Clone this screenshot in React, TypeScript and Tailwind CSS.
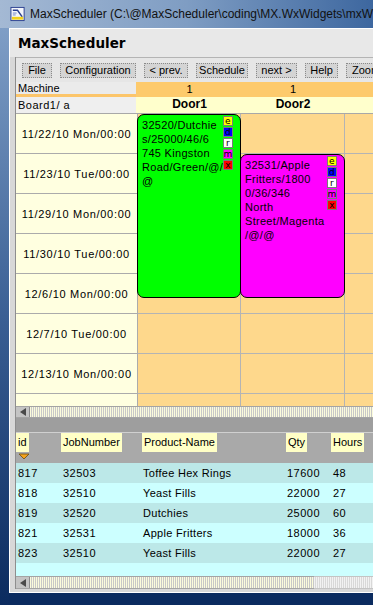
import React from "react";

const dates = [
  "11/22/10 Mon/00:00",
  "11/23/10 Tue/00:00",
  "11/29/10 Mon/00:00",
  "11/30/10 Tue/00:00",
  "12/6/10 Mon/00:00",
  "12/7/10 Tue/00:00",
  "12/13/10 Mon/00:00",
  "",
];

const jobs = [
  { id: "817", job: "32503", name: "Toffee Hex Rings", qty: "17600", hours: "48" },
  { id: "818", job: "32510", name: "Yeast Fills", qty: "22000", hours: "27" },
  { id: "819", job: "32520", name: "Dutchies", qty: "25000", hours: "60" },
  { id: "821", job: "32531", name: "Apple Fritters", qty: "18000", hours: "36" },
  { id: "823", job: "32510", name: "Yeast Fills", qty: "22000", hours: "27" },
];

const flags = [
  { letter: "e", bg: "bg-[#ffff00]" },
  { letter: "d", bg: "bg-[#0000ff]" },
  { letter: "r", bg: "bg-white" },
  { letter: "m", bg: "bg-[#ff00ff]" },
  { letter: "x", bg: "bg-[#ff0000]" },
];

const buttons = [
  { label: "File", w: "w-[30px]" },
  { label: "Configuration", w: "w-[76px]" },
  { label: "< prev.", w: "w-[44px]" },
  { label: "Schedule", w: "w-[52px]" },
  { label: "next >", w: "w-[41px]" },
  { label: "Help", w: "w-[33px]" },
  { label: "Zoom", w: "w-[40px]" },
];

const AppIcon = () => (
  <svg width="16" height="16" viewBox="0 0 16 16">
    <rect x="1" y="1" width="14" height="14" fill="#f4f6fb" stroke="#2a3f8f" />
    <path d="M3 4 L8 4 L13 11" stroke="#2a3f8f" strokeWidth="1.5" fill="none" />
    <path d="M3 7 H7 M3 9 H6" stroke="#6b7fc0" strokeWidth="1" />
    <rect x="2" y="11" width="12" height="3" fill="#f2d21c" />
  </svg>
);

const Flags = () => (
  <div className="absolute right-[7px] top-[1px] flex flex-col gap-[1px]">
    {flags.map((f) => (
      <div
        key={f.letter}
        className={`flex h-[10px] w-[10px] items-center justify-center border border-[#7a7a7a] ${f.bg} font-['DejaVu_Sans',sans-serif] text-[9px] leading-[8px] text-black`}
      >
        {f.letter}
      </div>
    ))}
  </div>
);

const Scrollbar = ({ className }: { className: string }) => (
  <div className={`flex shrink-0 border-y border-[#a4a4a4] ${className}`}>
    <div className="flex w-[14px] shrink-0 items-center justify-center border-r border-[#8c8c8c] bg-[#c4c4c4]">
      <div className="h-0 w-0 border-y-[4px] border-r-[6px] border-y-transparent border-r-[#4a4a4a]" />
    </div>
    <div className="flex-1 bg-[repeating-linear-gradient(90deg,#fbfbdc_0px,#fbfbdc_1px,#c8c8c8_1px,#c8c8c8_2px)]" />
  </div>
);

const App = () => {
  return (
    <div className="relative flex h-[605px] w-[373px] flex-col overflow-hidden bg-[#0b2b5f] font-['Liberation_Sans',Arial,sans-serif] text-black">
      {/* window title bar */}
      <div className="flex h-[28px] shrink-0 items-center gap-[5px] overflow-hidden bg-gradient-to-r from-[#a4b9d4] via-[#7f9dc3] to-[#3d679f] pl-[10px]">
        <AppIcon />
        <span className="whitespace-nowrap text-[12px] text-[#111]">
          MaxScheduler (C:\@MaxScheduler\coding\MX.WxWidgets\mxW
        </span>
      </div>

      <div className="flex min-h-0 flex-1">
        <div className="w-[9px] shrink-0 bg-gradient-to-b from-[#7f9ec6] via-[#3a5f94] to-[#0b2b5f]" />
        <div className="mb-[12px] flex min-w-0 flex-1 flex-col border-l border-t border-b border-white bg-[#d8d8d8]">
          {/* app header */}
          <div className="flex h-[28px] shrink-0 items-center bg-[#e8e8e8] pl-[8px] font-['DejaVu_Sans',sans-serif] text-[13.5px] font-bold">
            MaxScheduler
          </div>

          <div className="flex min-h-0 flex-1 pb-[3px]">
            <div className="w-[5px] shrink-0 bg-[#d8d8d8]" />
            <div className="flex min-w-0 flex-1 flex-col border-l border-[#8e8e8e]">
              {/* toolbar */}
              <div className="flex h-[25px] shrink-0 items-center gap-[8px] overflow-hidden border-t border-[#b4b4b4] bg-[#e6e6e6] pl-[6px]">
                {buttons.map((b) => (
                  <div
                    key={b.label}
                    className={`flex h-[15px] shrink-0 items-center justify-center border border-dotted border-[#8a8a8a] bg-[#d4d4d4] text-[11px] ${b.w}`}
                  >
                    {b.label}
                  </div>
                ))}
              </div>

              {/* machine row */}
              <div className="flex h-[15px] shrink-0 text-[11px]">
                <div className="flex w-[120px] shrink-0 flex-col bg-[#ebebeb]">
                  <div className="flex-1 pl-[2px] leading-[12px]">Machine</div>
                  <div className="h-[3px] bg-[#fcc56a]" />
                </div>
                <div className="flex flex-1 bg-[#fdca6c] pl-[2px] leading-[14px]">
                  <div className="w-[103px] text-center">1</div>
                  <div className="w-[104px] text-center">1</div>
                </div>
              </div>

              {/* board row */}
              <div className="flex h-[16px] shrink-0">
                <div className="w-[120px] shrink-0 bg-[#efefef] pl-[2px] text-[11px] leading-[17px] tracking-[0.5px]">
                  Board1/ a
                </div>
                <div className="flex flex-1 bg-[#ffffcc] pl-[2px] text-[12px] font-bold leading-[15px]">
                  <div className="w-[103px] text-center">Door1</div>
                  <div className="w-[104px] text-center">Door2</div>
                </div>
              </div>

              {/* schedule grid */}
              <div className="relative h-[293px] shrink-0 overflow-hidden border-t border-[#a8a8a8]">
                <div className="grid grid-cols-[122px_103px_104px_1fr]">
                  {dates.map((d, i) => (
                    <React.Fragment key={i}>
                      <div className="flex h-[40px] items-center justify-center border-b border-r border-[#ababab] bg-[#ffffe0] pt-[2px] text-[11px] tracking-[0.7px]">
                        {d}
                      </div>
                      <div className="h-[40px] border-b border-r border-[#b4b4b4] bg-[#fed88c]" />
                      <div className="h-[40px] border-b border-r border-[#b4b4b4] bg-[#fed88c]" />
                      <div className="h-[40px] border-b border-[#b4b4b4] bg-[#fed88c]" />
                    </React.Fragment>
                  ))}
                </div>

                <div className="absolute left-[121px] top-0 h-[184px] w-[104px] rounded-[7px] border border-black bg-[#00ff00] pl-[4px] pt-[3px] text-[11px] tracking-[0.3px]">
                  {["32520/Dutchie", "s/25000/46/6", "745 Kingston", "Road/Green/@/", "@"].map((l) => (
                    <div key={l} className="h-[14px] whitespace-nowrap leading-[14px]">
                      {l}
                    </div>
                  ))}
                  <Flags />
                </div>

                <div className="absolute left-[224px] top-[40px] h-[144px] w-[105px] rounded-[7px] border border-black bg-[#ff00ff] pl-[4px] pt-[3px] text-[11px] tracking-[0.3px]">
                  {["32531/Apple", "Fritters/1800", "0/36/346", "North", "Street/Magenta", "/@/@"].map((l) => (
                    <div key={l} className="h-[14px] whitespace-nowrap leading-[14px]">
                      {l}
                    </div>
                  ))}
                  <Flags />
                </div>
              </div>

              <Scrollbar className="h-[12px]" />

              <div className="h-[14px] shrink-0 bg-[#9e9e9e]" />

              {/* job table header */}
              <div className="flex h-[31px] shrink-0 flex-col border-t border-[#d0d0d0] bg-[#a9a9a9] text-[11px]">
                <div className="grid grid-cols-[45px_81px_144px_45px_1fr]">
                  {["id", "JobNumber", "Product-Name", "Qty", "Hours"].map((h) => (
                    <div key={h} className="flex">
                      <div className="h-[19px] bg-[#ffffc6] px-[2px] leading-[19px]">{h}</div>
                    </div>
                  ))}
                </div>
                <svg width="12" height="7" viewBox="0 0 12 7" className="ml-[2px] mt-[1px]">
                  <path d="M1 1 H11 L6 6 Z" fill="#f3a31c" stroke="#6b4a10" strokeWidth="0.8" />
                </svg>
              </div>

              {/* job rows */}
              <div className="flex flex-1 flex-col bg-[#ccffff] text-[11px]">
                {jobs.map((j, i) => (
                  <div
                    key={j.id}
                    className={`grid h-[20px] grid-cols-[45px_81px_144px_45px_1fr] items-center ${i % 2 === 0 ? "bg-[#bce8e8]" : "bg-[#ccffff]"}`}
                  >
                    <div className="pl-[2px] tracking-[0.5px]">{j.id}</div>
                    <div className="pl-[2px] tracking-[0.5px]">{j.job}</div>
                    <div className="pl-[1px] tracking-[0.3px]">{j.name}</div>
                    <div className="pl-[1px] tracking-[0.5px]">{j.qty}</div>
                    <div className="pl-[2px] tracking-[0.5px]">{j.hours}</div>
                  </div>
                ))}
              </div>

              <div className="flex h-[13px] shrink-0">
                <Scrollbar className="h-[13px] w-[298px]" />
                <div className="flex-1 border-y border-[#c4c4c4] bg-[repeating-linear-gradient(90deg,#f2f2f2_0px,#f2f2f2_1px,#d8d8d8_1px,#d8d8d8_2px)]" />
              </div>
            </div>
          </div>
        </div>
      </div>
    </div>
  );
};

export default App;
